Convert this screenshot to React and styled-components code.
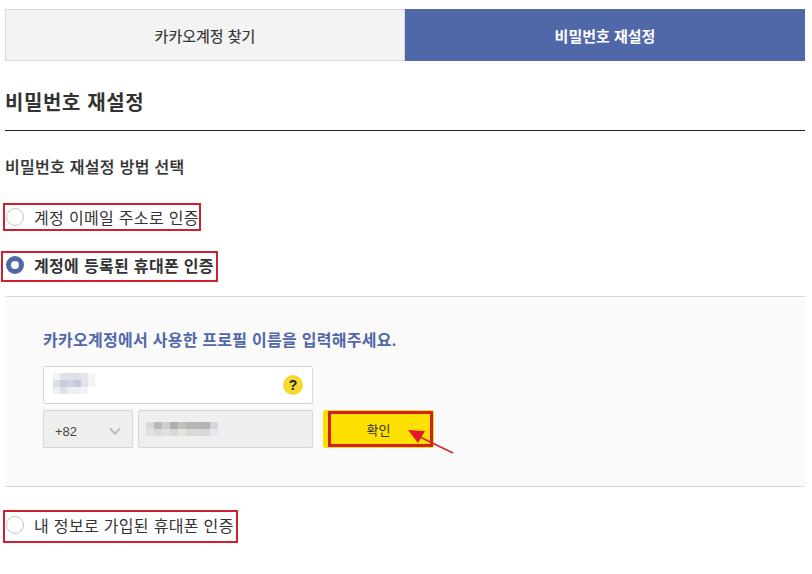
import React from 'react';
import styled, { createGlobalStyle } from 'styled-components';

const Global = createGlobalStyle`
  html, body { margin: 0; padding: 0; background: #fff; }
  body { font-family: "Liberation Sans", "Noto Sans CJK KR", sans-serif; color: #333; }
  * { box-sizing: border-box; }
`;
const Page = styled.div`
  width: 812px; height: 574px; padding: 9px 7px 0 5px; overflow: hidden; position: relative;
`;
const Tabs = styled.div`display: flex; height: 52px;`;
const Tab = styled.div`
  flex: none; width: 50%; display: flex; align-items: center; justify-content: center;
  font-size: 15px; font-weight: ${p => (p.$active ? 700 : 400)};
  color: ${p => (p.$active ? '#fff' : '#333')};
  background: ${p => (p.$active ? '#5067a8' : '#f3f3f3')};
  border: ${p => (p.$active ? 'none' : '1px solid #d8d8d8')};
  -webkit-text-stroke: ${p => (p.$active ? '0' : '0.2px #333')};
`;
const Title = styled.h1`
  margin: 0; height: 70px; padding-top: 29px; border-bottom: 1px solid #222;
  font-size: 20px; line-height: 26px; font-weight: 700; letter-spacing: 0.6px; color: #333;
`;
const Subtitle = styled.h2`
  margin: 0; padding-top: 26px; height: 75px;
  font-size: 16px; line-height: 22px; font-weight: 500; letter-spacing: 0.3px; color: #333;
  -webkit-text-stroke: 0.2px #333;
`;
const Option = styled.div`
  position: relative; display: flex; align-items: center; gap: 10px; height: 22px;
  margin-top: ${p => p.$top || 0}px; padding-left: 1px;
  font-size: 16px; letter-spacing: 0.33px; color: #333;
  font-weight: ${p => (p.$on ? 700 : 400)};
`;
const Radio = styled.span`
  flex: none; width: 18px; height: 18px; border-radius: 50%;
  background: #fff; border: 1px solid #c4c4c4;
  ${p => p.$on && `border: 5.5px solid #5067a8;`}
`;
const Mark = styled.span`
  position: absolute; border: ${p => p.$b || 2}px solid #d0202f; pointer-events: none;
  left: ${p => p.$l}px; top: ${p => p.$t}px; width: ${p => p.$w}px; height: ${p => p.$h}px;
`;
const Panel = styled.section`
  height: 191px; margin-top: 20px; padding: 33px 38px 0; background: #fafafa;
  border-top: 1px solid #d8d8d8; border-bottom: 1px solid #d8d8d8;
`;
const Prompt = styled.p`
  margin: 0 0 14px; font-size: 16px; line-height: 22px; font-weight: 700; color: #5067a8; letter-spacing: 0.27px;
`;
const FieldRow = styled.div`display: flex; gap: 5px; margin-bottom: 6px; align-items: flex-start;`;
const NameField = styled.div`
  width: 270px; height: 38px; display: flex; align-items: center; justify-content: space-between;
  padding: 0 9px; background: #fff; border: 1px solid #d6d6d6; border-radius: 2px;
`;
const Help = styled.span`
  width: 20px; height: 20px; border-radius: 50%; background: #f5d930; color: #222;
  display: flex; align-items: center; justify-content: center; font-size: 14px; font-weight: 700;
`;
const CountrySelect = styled.div`
  width: 90px; height: 38px; display: flex; align-items: center; justify-content: space-between;
  padding: 4px 11px 0 11px; background: #efefef; border: 1px solid #d6d6d6; border-radius: 2px;
  font-size: 13px; color: #444;
`;
const PhoneField = styled.div`
  width: 175px; height: 38px; display: flex; align-items: center; padding: 0 7px;
  background: #efefef; border: 1px solid #d6d6d6; border-radius: 2px;
`;
const Confirm = styled.button`
  position: relative; margin-left: 5px; width: 111px; height: 38px; padding: 0; border: 0; border-radius: 3px;
  background: #fee000; color: #333; font: 400 13px "Liberation Sans", "Noto Sans CJK KR", sans-serif;
`;
const Arrow = styled.svg`position: absolute; left: 82px; top: 18px; overflow: visible;`;
const Blur = styled.svg`display: block; flex: none; margin-bottom: ${p => p.$lift || 0}px;`;

const nameCells = [
  ['#f3f3f6','#e0e2ea','#dfe1ea','#dcdfe8','#e4e6ee','#f5f5f9'],
  ['#dcdee6','#c6cbdb','#cfd3df','#c4c8d8','#e0e2ec','#f2f2f7'],
  ['#eceef2','#dde0e6','#eeeff3','#f0f0f4','#f3f3f7','#ffffff'],
];
const phoneCells = [
  ['#d8d9d4','#b8bab8','#cfcfcf','#aeb0b0','#c0c2bc','#b3b8b6','#b4b6b8','#b0b3b2','#d4d6da'],
  ['#e2e3e0','#dadada','#e0e0e0','#d8d8d8','#e4e4dc','#d8dad8','#d8d8da','#d6d8d8','#e6e6ee'],
];
const Pixels = ({ cells, w, h, lift }) => (
  <Blur width={cells[0].length * w} height={cells.length * h} $lift={lift} aria-hidden="true">
    {cells.map((row, y) => row.map((c, x) => (
      <rect key={`${x}-${y}`} x={x * w} y={y * h} width={w} height={h} fill={c} />
    )))}
  </Blur>
);

export default function App() {
  return (
    <Page>
      <Global />
      <Tabs>
        <Tab>카카오계정 찾기</Tab>
        <Tab $active>비밀번호 재설정</Tab>
      </Tabs>
      <Title>비밀번호 재설정</Title>
      <Subtitle>비밀번호 재설정 방법 선택</Subtitle>
      <Option>
        <Radio />계정 이메일 주소로 인증
        <Mark $l={-2} $t={-3} $w={198} $h={28} />
      </Option>
      <Option $on $top={26}>
        <Radio $on />계정에 등록된 휴대폰 인증
        <Mark $l={-4} $t={-3} $w={217} $h={31} />
      </Option>
      <Panel>
        <Prompt>카카오계정에서 사용한 프로필 이름을 입력해주세요.</Prompt>
        <FieldRow>
          <NameField>
            <Pixels cells={nameCells} w={7} h={7} lift={3} />
            <Help>?</Help>
          </NameField>
        </FieldRow>
        <FieldRow>
          <CountrySelect>
            +82
            <svg width="12" height="8" viewBox="0 0 12 8" aria-hidden="true">
              <path d="M1 1.5 6 6.5 11 1.5" fill="none" stroke="#bdbdbd" strokeWidth="2" />
            </svg>
          </CountrySelect>
          <PhoneField><Pixels cells={phoneCells} w={8} h={7} lift={0} /></PhoneField>
          <Confirm>
            확인
            <Mark $b={3} $l={5} $t={1} $w={105} $h={36} />
            <Arrow width="48" height="36" viewBox="0 0 48 36" aria-hidden="true">
              <path d="M3 2 20 3 13 15Z" fill="#e3162a" />
              <path d="M15 9 48 25" stroke="#d9202f" strokeWidth="1.6" fill="none" />
            </Arrow>
          </Confirm>
        </FieldRow>
      </Panel>
      <Option $top={27}>
        <Radio />내 정보로 가입된 휴대폰 인증
        <Mark $l={-2} $t={-4} $w={235} $h={33} />
      </Option>
    </Page>
  );
}
